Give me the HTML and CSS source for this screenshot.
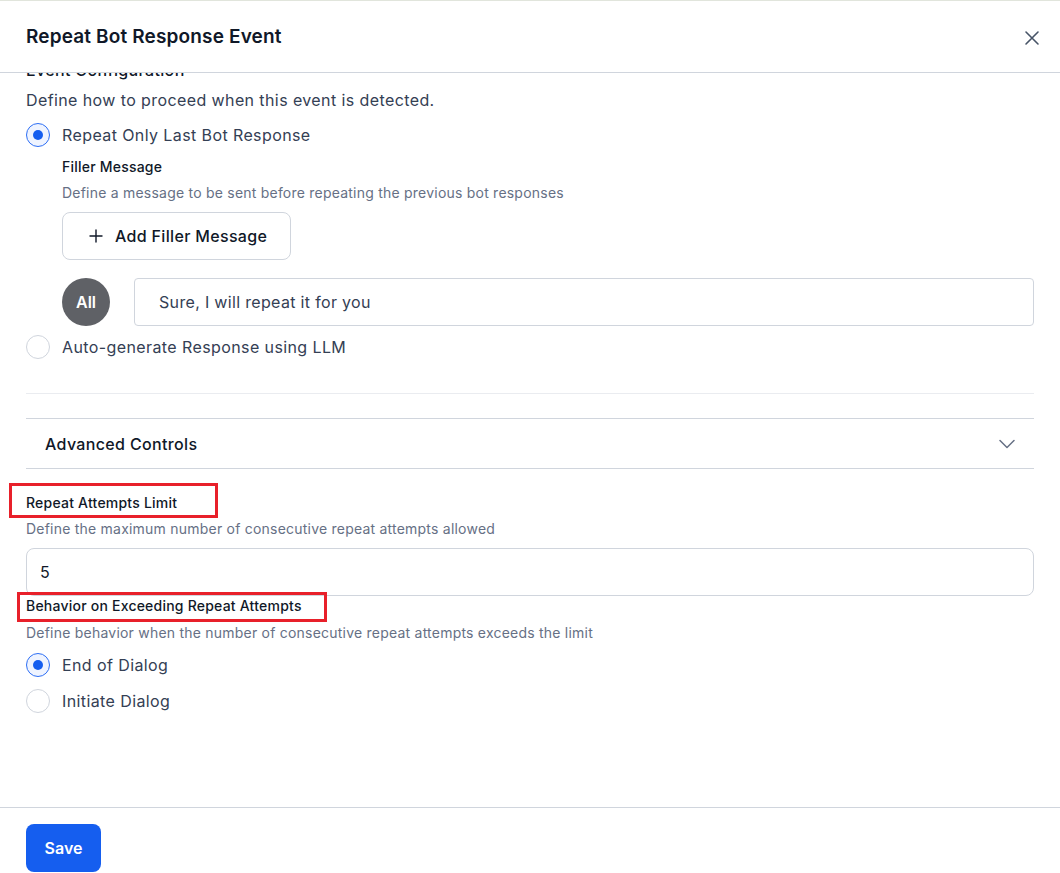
FILE: index.html
```html
<!DOCTYPE html>
<html>
<head>
<meta charset="utf-8">
<link rel="stylesheet" href="styles.css">
</head>
<body>
<div class="modal">
  <header class="header">
    <h1 class="title">Repeat Bot Response Event</h1>
    <svg class="close" width="16" height="16" viewBox="0 0 16 16"><path d="M2 2L14 14M14 2L2 14" stroke="#475467" stroke-width="1.6" stroke-linecap="round"/></svg>
  </header>
  <main class="body">
    <div class="section-title">Event Configuration</div>
    <div class="section-desc">Define how to proceed when this event is detected.</div>
    <div class="radio-row r1"><span class="radio checked"></span><span class="radio-label">Repeat Only Last Bot Response</span></div>
    <div class="nested">
      <div class="label l-filler">Filler Message</div>
      <div class="help h-filler">Define a message to be sent before repeating the previous bot responses</div>
      <button class="add-btn"><svg width="14" height="14" viewBox="0 0 14 14"><path d="M7 1V13M1 7H13" stroke="#101828" stroke-width="1.4" stroke-linecap="round"/></svg><span>Add Filler Message</span></button>
      <div class="msg-row">
        <div class="avatar">All</div>
        <div class="msg-input">Sure, I will repeat it for you</div>
      </div>
    </div>
    <div class="radio-row r2"><span class="radio"></span><span class="radio-label">Auto-generate Response using LLM</span></div>
    <div class="divider"></div>
    <div class="accordion">
      <span class="acc-title">Advanced Controls</span>
      <svg width="16" height="10" viewBox="0 0 16 10"><path d="M1 1.5L8 8.5L15 1.5" fill="none" stroke="#667085" stroke-width="1.5" stroke-linecap="round" stroke-linejoin="round"/></svg>
    </div>
    <div class="label l-limit"><span>Repeat Attempts Limit</span><span class="annot a1"></span></div>
    <div class="help h-limit">Define the maximum number of consecutive repeat attempts allowed</div>
    <div class="num-input">5</div>
    <div class="label l-behav"><span>Behavior on Exceeding Repeat Attempts</span><span class="annot a2"></span></div>
    <div class="help h-behav">Define behavior when the number of consecutive repeat attempts exceeds the limit</div>
    <div class="radio-row r3"><span class="radio checked"></span><span class="radio-label">End of Dialog</span></div>
    <div class="radio-row r4"><span class="radio"></span><span class="radio-label">Initiate Dialog</span></div>
  </main>
  <footer class="footer">
    <button class="save">Save</button>
  </footer>
</div>
</body>
</html>
```
FILE: styles.css
```css
* { box-sizing: border-box; }
html, body { margin: 0; padding: 0; }
body {
  font-family: Inter, "Noto Sans", sans-serif;
  background: #fff;
  color: #344054;
}
.modal {
  width: 1060px;
  height: 873px;
  display: flex;
  flex-direction: column;
  border-top: 1px solid #e1e5dc;
  overflow: hidden;
}
.header {
  height: 72px;
  flex: none;
  display: flex;
  align-items: center;
  justify-content: space-between;
  padding: 0 20px 0 26px;
  border-bottom: 1px solid #d0d5dd;
  background: #fff;
  position: relative;
  z-index: 2;
}
.title {
  margin: 0;
  font-size: 19px;
  font-weight: 600;
  letter-spacing: 0.15px;
  color: #101828;
  line-height: 28px;
}
.close { margin-top: 2px; }
.body {
  flex: 1;
  overflow: hidden;
  padding: 0 26px;
  display: flex;
  flex-direction: column;
}
.section-title {
  margin-top: -15px;
  font-size: 16px;
  font-weight: 500;
  line-height: 24px;
  letter-spacing: 0.35px;
  color: #101828;
}
.section-desc {
  margin-top: 6px;
  font-size: 16px;
  line-height: 24px;
  letter-spacing: 0.4px;
  color: #344054;
}
.radio-row {
  display: flex;
  align-items: center;
  gap: 12px;
  height: 24px;
}
.r1 { margin-top: 11px; }
.r2 { margin-top: 9px; }
.r3 { margin-top: 10px; }
.r4 { margin-top: 12px; }
.radio {
  width: 24px;
  height: 24px;
  border-radius: 50%;
  border: 1px solid #d0d5dd;
  background: #fff;
  flex: none;
  display: flex;
  align-items: center;
  justify-content: center;
}
.radio.checked {
  border: 1.5px solid #2e6ff5;
  background: #eff4ff;
}
.radio.checked::after {
  content: "";
  width: 10px;
  height: 10px;
  border-radius: 50%;
  background: #155eef;
}
.radio-label {
  font-size: 16px;
  line-height: 24px;
  letter-spacing: 0.4px;
  color: #344054;
}
.nested {
  padding-left: 36px;
  display: flex;
  flex-direction: column;
}
.label {
  font-size: 14px;
  font-weight: 500;
  line-height: 20px;
  color: #101828;
  position: relative;
  letter-spacing: 0.22px;
}
.help {
  font-size: 14px;
  line-height: 20px;
  color: #667085;
  letter-spacing: 0.22px;
}
.l-filler { margin-top: 10px; }
.h-filler { margin-top: 6px; }
.add-btn {
  margin-top: 9px;
  align-self: flex-start;
  height: 48px;
  width: 229px;
  border: 1px solid #d0d5dd;
  border-radius: 8px;
  background: #fff;
  display: flex;
  align-items: center;
  gap: 12px;
  padding: 0 0 0 26px;
  font-family: inherit;
  font-size: 16px;
  font-weight: 500;
  letter-spacing: 0.33px;
  color: #101828;
}
.msg-row {
  margin-top: 18px;
  display: flex;
  align-items: center;
  gap: 24px;
}
.avatar {
  width: 48px;
  height: 48px;
  border-radius: 50%;
  background: #5f6166;
  color: #fff;
  font-size: 16px;
  font-weight: 600;
  display: flex;
  align-items: center;
  justify-content: center;
  flex: none;
}
.msg-input {
  flex: 1;
  height: 48px;
  border: 1px solid #d0d5dd;
  border-radius: 4px;
  display: flex;
  align-items: center;
  padding-left: 24px;
  font-size: 16px;
  letter-spacing: 0.33px;
  color: #344054;
}
.divider {
  margin-top: 34px;
  height: 1px;
  background: #eaecf0;
}
.accordion {
  margin-top: 24px;
  height: 51px;
  border-top: 1px solid #d0d5dd;
  border-bottom: 1px solid #d0d5dd;
  display: flex;
  align-items: center;
  justify-content: space-between;
  padding: 0 19px;
}
.acc-title {
  font-size: 16px;
  font-weight: 500;
  letter-spacing: 0.35px;
  color: #101828;
}
.l-limit { margin-top: 24px; }
.h-limit { margin-top: 6px; }
.num-input {
  margin-top: 9px;
  height: 48px;
  border: 1px solid #d0d5dd;
  border-radius: 8px;
  display: flex;
  align-items: center;
  padding-left: 13px;
  font-size: 16px;
  color: #101828;
}
.l-behav { margin-top: 0; }
.h-behav { margin-top: 7px; }
.annot {
  position: absolute;
  border: 3px solid #e8202a;
  pointer-events: none;
}
.a1 { left: -17px; top: -10px; width: 209px; height: 35px; }
.a2 { left: -9px; top: -4px; width: 310px; height: 30px; }
.footer {
  flex: none;
  height: 66px;
  border-top: 1px solid #d0d5dd;
  padding: 16px 26px 0;
}
.save {
  width: 75px;
  height: 48px;
  border: none;
  border-radius: 8px;
  background: #155eef;
  color: #fff;
  font-family: inherit;
  font-size: 16px;
  font-weight: 600;
}
```
